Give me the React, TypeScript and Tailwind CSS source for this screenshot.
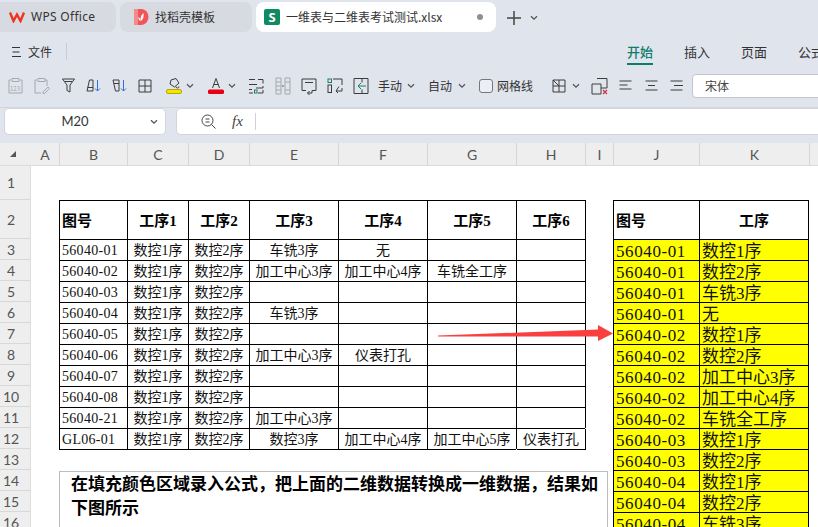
import React from 'react';

const leftRows = [
  ['56040-01', '数控1序', '数控2序', '车铣3序', '无', '', ''],
  ['56040-02', '数控1序', '数控2序', '加工中心3序', '加工中心4序', '车铣全工序', ''],
  ['56040-03', '数控1序', '数控2序', '', '', '', ''],
  ['56040-04', '数控1序', '数控2序', '车铣3序', '', '', ''],
  ['56040-05', '数控1序', '数控2序', '', '', '', ''],
  ['56040-06', '数控1序', '数控2序', '加工中心3序', '仪表打孔', '', ''],
  ['56040-07', '数控1序', '数控2序', '', '', '', ''],
  ['56040-08', '数控1序', '数控2序', '', '', '', ''],
  ['56040-21', '数控1序', '数控2序', '加工中心3序', '', '', ''],
  ['GL06-01', '数控1序', '数控2序', '数控3序', '加工中心4序', '加工中心5序', '仪表打孔'],
];

const rightRows = [
  ['56040-01', '数控1序'],
  ['56040-01', '数控2序'],
  ['56040-01', '车铣3序'],
  ['56040-01', '无'],
  ['56040-02', '数控1序'],
  ['56040-02', '数控2序'],
  ['56040-02', '加工中心3序'],
  ['56040-02', '加工中心4序'],
  ['56040-02', '车铣全工序'],
  ['56040-03', '数控1序'],
  ['56040-03', '数控2序'],
  ['56040-04', '数控1序'],
  ['56040-04', '数控2序'],
  ['56040-04', '车铣3序'],
];

const Chevron = ({ className = '' }: { className?: string }) => (
  <svg width="8" height="6" viewBox="0 0 8 6" fill="none" stroke="#555" strokeWidth="1.3" className={`shrink-0 ${className}`}>
    <path d="M1 1.2 4 4.2 7 1.2" />
  </svg>
);

const Ico = ({ w = 16, className = '', children }: { w?: number; className?: string; children: React.ReactNode }) => (
  <svg width={w} height="18" viewBox={`0 0 ${w} 18`} fill="none" stroke="#3c3c3c" strokeWidth="1" className={`shrink-0 ${className}`}>
    {children}
  </svg>
);

const HeadCell = ({ label, first }: { label: string; first?: boolean }) => (
  <div className={`flex items-center justify-center bg-[#eeeeee] border-b border-[#dcdcdc] text-[14px] text-[#555] font-['Lato',sans-serif] ${first ? '' : 'border-l border-l-[#d6d6d6]'}`}>
    {label}
  </div>
);

const RowHead = ({ n }: { n: number }) => (
  <div className="flex items-center justify-center bg-[#eeeeee] border-b border-[#d8d8d8] border-r border-r-[#dddddd] text-[14px] pr-[8px] text-[#555] font-['Lato',sans-serif]">
    {n}
  </div>
);

const serif = "font-['Liberation_Serif','Noto_Sans_CJK_SC',serif]";

export default function App() {
  return (
    <div className="relative w-[818px] h-[527px] overflow-hidden bg-[#e0e4ed] text-[#333] font-['Noto_Sans_CJK_SC',sans-serif]">
      {/* tab bar */}
      <div className="flex h-[33px] items-start pt-[2px] text-[12px]">
        <div className="flex h-[30px] w-[116px] items-center rounded-r-lg bg-[#d8dae2] pl-[9px]">
          <svg width="16" height="12" viewBox="0 0 16 12" fill="none" stroke="#f0321e" strokeWidth="2.4">
            <path d="M1 1.5 4.5 10 8 3.5 11.5 10 15 1.5" />
          </svg>
          <span className="ml-[6px] font-['Noto_Sans',sans-serif] tracking-[0.3px]">WPS Office</span>
        </div>
        <div className="ml-[4px] flex h-[30px] w-[132px] items-center rounded-lg bg-[#d8dae2] pl-[14px]">
          <svg width="15" height="16" viewBox="0 0 15 16">
            <path d="M0 0h7a7.5 8 0 0 1 0 16H0z" fill="#f0555a" />
            <path d="M0 0h4v16H0z" fill="#f58a8a" />
            <path d="M7 12c-1-3 0-6 2.5-8 .5 3 0 6-2.5 8zM6.500 12c-1.500-.5-2.200-2-2-4 1.300.8 2 2.200 2 4z" fill="#fff" />
          </svg>
          <span className="ml-[6px]">找稻壳模板</span>
        </div>
        <div className="ml-[4px] flex h-[30px] w-[240px] items-center rounded-lg bg-white pl-[8px]">
          <div className="flex h-[16px] w-[16px] items-center justify-center rounded-[2px] bg-[#0f8a63] text-[13px] font-bold leading-none text-white font-['Noto_Sans',sans-serif]">S</div>
          <span className="ml-[6px] w-[160px] whitespace-nowrap">一维表与二维表考试测试.xlsx</span>
          <span className="ml-[31px] h-[6px] w-[6px] rounded-full bg-[#8f8f8f]" />
        </div>
        <svg width="14" height="14" viewBox="0 0 14 14" stroke="#444" strokeWidth="1.5" className="ml-[11px] mt-[9px]">
          <path d="M7 0v14M0 7h14" />
        </svg>
        <Chevron className="ml-[9px] mt-[13px]" />
      </div>

      {/* menu row */}
      <div className="flex h-[37px] items-center text-[12px] whitespace-nowrap">
        <svg width="9" height="10" viewBox="0 0 9 10" stroke="#333" className="ml-[12px] shrink-0">
          <path d="M0 .5h8M.5 5h7M0 9.500h9" />
        </svg>
        <span className="ml-[7px] w-[26px] shrink-0">文件</span>
        <span className="ml-[12px] h-[17px] w-px shrink-0 bg-[#c8ccd4]" />
        <div className="ml-[560px] flex shrink-0 text-[13px]">
          <div className="relative w-[26px] font-medium text-[#0c7c6c]">
            开始
            <span className="absolute left-0 top-[21px] h-[2px] w-[26px] bg-[#0c7c6c]" />
          </div>
          <span className="ml-[31px] w-[26px]">插入</span>
          <span className="ml-[31px] w-[26px]">页面</span>
          <span className="ml-[31px]">公式</span>
        </div>
      </div>

      {/* toolbar */}
      <div className="flex h-[30px] items-center pt-[2px] text-[12px] whitespace-nowrap [&>*]:shrink-0">
        <Ico className="ml-[8px]">
          <g stroke="#a5a8ae">
            <path d="M3 3H1v13h13V3h-2M4 1.500h7v3H4z" />
            <text x="2" y="14" fontSize="6" fill="#a5a8ae" stroke="none">123</text>
          </g>
        </Ico>
        <Ico className="ml-[10px]">
          <g stroke="#a5a8ae">
            <path d="M3 3H1v13h6M13 3h-2v0M13 3v6M4 1.500h7v3H4zM9 15l5-5 1.500 1.500-5 5H9z" />
          </g>
        </Ico>
        <Ico w={13} className="ml-[12px]">
          <path d="M.5 2h12l-4.500 6v7l-3-1.500V8zM3 4.500h7" />
        </Ico>
        <Ico className="ml-[11px]">
          <path d="M1 14 3.500 3H7v11zM1.700 10.500H7" />
          <path d="M11.500 3v11M9 11.500l2.500 2.500 2.500-2.500" stroke="#2f6fe0" />
        </Ico>
        <Ico className="ml-[10px]">
          <path d="M1 3h6v11H3.500zM2 6.500h5" />
          <path d="M11.500 3v11M9 11.500l2.500 2.500 2.500-2.500" stroke="#2f6fe0" />
        </Ico>
        <Ico w={14} className="ml-[10px]">
          <path d="M1 3h12v12H1zM1 9h12M7 3v12" />
        </Ico>
        <Ico w={16} className="ml-[14px]">
          <path d="M5 3 10 1.500 13 6l-4.500 4L4 7zM10 9.500a1.500 1.500 0 0 0 3 0" />
          <rect x=".5" y="12.500" width="15" height="4" rx="1.500" fill="#f4e600" stroke="#b5ab00" />
        </Ico>
        <Chevron className="ml-[4px]" />
        <Ico w={16} className="ml-[14px]">
          <path d="M4.500 11 8 1.500 11.500 11M5.800 7.500h4.400" />
          <rect x="0" y="12.500" width="16" height="4.500" rx="1.500" fill="#e60012" stroke="none" />
        </Ico>
        <Chevron className="ml-[4px]" />
        <Ico className="ml-[12px]">
          <path d="M1 2.500h6M10 2.500h5v4M1 7.500h8M15 9v2H8M1 12.500h3M1 16h4M10 16h5v-3" />
          <rect x="6.500" y="13" width="2.500" height="3" stroke="#16845f" />
        </Ico>
        <Ico className="ml-[11px]">
          <g stroke="#a5a8ae">
            <path d="M1 1h5v16H1zM10 1h5v16h-5zM1 5h5M1 9h5M1 13h5M10 5h5M10 13h5" />
          </g>
          <path d="M7 9h2" stroke="#16845f" />
        </Ico>
        <Ico className="ml-[10px]">
          <path d="M5 13.500H1V2h14v11.500h-4M4 5.500h8M11 13.500v2.500H6.500M8.500 14 6.500 16l2 2" />
        </Ico>
        <Ico className="ml-[10px]">
          <path d="M6 2h9v6M15 11v3H9" />
          <rect x="1" y="2" width="3.500" height="3.500" stroke="#16845f" />
          <rect x="1" y="8" width="3.500" height="7.500" stroke="#3c3c3c" />
          <path d="M12 9.500 9 14l2 2" />
        </Ico>
        <Ico className="ml-[10px]">
          <path d="M1 1.500h14v15H1zM9 1.500v4M9 12.500v4" />
          <path d="M13 9H5M8 6 5 9l3 3" stroke="#16845f" />
        </Ico>
        <span className="ml-[9px] w-[25px]">手动</span>
        <Chevron className="ml-[4px]" />
        <span className="ml-[13px] w-[25px]">自动</span>
        <Chevron className="ml-[5px]" />
        <span className="ml-[13px] h-[14px] w-[14px] rounded-[3px] border border-[#777] bg-[#eceef3]" />
        <span className="ml-[4px] w-[36px]">网格线</span>
        <Ico w={14} className="ml-[19px]">
          <path d="M1 3h12v12H1zM1 9h12M7 3v12M1 3l6 6" />
        </Ico>
        <Chevron className="ml-[6px]" />
        <Ico w={17} className="ml-[11px]">
          <path d="M1 7h9v10H1zM6 1.500h10V11H10" />
          <path d="M12 13l4 4M16 13l-4 4" stroke="#d9304a" strokeWidth="1.300" />
        </Ico>
        <Ico w={13} className="ml-[11px]">
          <path d="M.5 4h12M.5 8h8M.5 12h12" />
        </Ico>
        <Ico w={13} className="ml-[13px]">
          <path d="M.5 4h12M3 8.500h7M.5 13h12" />
        </Ico>
        <Ico w={13} className="ml-[12px]">
          <path d="M.5 4h12M4 8.500h9M.5 13h12" />
        </Ico>
        <div className="ml-[9px] flex h-[24px] w-[140px] items-center rounded-l-[4px] border border-[#c4c6cc] bg-white pl-[12px] text-[12px] text-[#444]">
          宋体
        </div>
      </div>

      {/* formula row */}
      <div className="mt-[7px] border-t border-[#d2d5dd]">
        <div className="flex h-[27px] [&>*]:shrink-0">
          <div className="relative ml-[4px] flex w-[162px] items-center justify-center rounded-[5px] border border-[#d3d5db] bg-white pr-[20px] text-[13px] font-['Lato',sans-serif]">
            M20
            <Chevron className="absolute right-[7px] top-[10px]" />
          </div>
          <div className="ml-[10px] flex w-[660px] items-center rounded-[5px] border border-[#d3d5db] bg-white pl-[24px]">
            <svg width="15" height="15" viewBox="0 0 15 15" fill="none" stroke="#444">
              <circle cx="6.500" cy="6.500" r="5.500" />
              <path d="m10.500 10.500 4 4M4.500 5h4M4.500 8h4" />
            </svg>
            <span className={`ml-[16px] text-[15px] italic text-[#444] ${serif}`}>fx</span>
            <span className="ml-[12px] h-[17px] w-px bg-[#d0d2d8]" />
          </div>
        </div>
      </div>

      {/* sheet */}
      <div className="mt-[8px] grid grid-cols-[31px_28px_68px_61px_61px_89px_89px_89px_69px_28px_86px_110px_1fr] grid-rows-[23px_34px_39px_repeat(14,21px)] bg-white">
        <div className="flex items-center justify-center bg-[#eeeeee] border-b border-[#dcdcdc]">
          <span className="ml-[-5px] h-0 w-0 border-b-[6px] border-l-[6px] border-b-[#555] border-l-transparent" />
        </div>
        {['A', 'B', 'C', 'D', 'E', 'F', 'G', 'H', 'I', 'J', 'K', ''].map((c, i) => (
          <HeadCell key={i} label={c} first={i === 0} />
        ))}

        {/* row 1 */}
        <RowHead n={1} />
        <div className="col-span-12" />

        {/* row 2 */}
        <RowHead n={2} />
        <div />
        <div className={`flex items-center border-t border-l border-black pl-[2px] pt-[2px] text-[15px] font-bold text-black ${serif}`}>图号</div>
        {['工序1', '工序2', '工序3', '工序4', '工序5', '工序6'].map((h, i) => (
          <div key={h} className={`flex items-center justify-center border-t border-l border-black pt-[2px] text-[15px] font-bold text-black ${serif} ${i === 5 ? 'shadow-[1px_0_0_#000]' : ''}`}>{h}</div>
        ))}
        <div />
        <div className={`flex items-center border-t border-l border-black pl-[2px] pt-[2px] text-[15px] font-bold text-black ${serif}`}>图号</div>
        <div className={`flex items-center justify-center border-t border-x border-black pt-[2px] text-[15px] font-bold text-black ${serif}`}>工序</div>
        <div />

        {/* rows 3 to 16 */}
        {rightRows.map((right, r) => {
          const left = leftRows[r];
          const last = r === leftRows.length - 1;
          return (
            <React.Fragment key={r}>
              <RowHead n={r + 3} />
              <div />
              {left ? (
                left.map((v, c) => (
                  <div
                    key={c}
                    className={`flex items-center border-t border-l border-black pt-[2px] text-[14px] leading-none whitespace-nowrap text-[#111] ${serif} ${c === 0 ? 'pl-[2px] tracking-[0.3px]' : 'justify-center'} ${last && c === 6 ? 'shadow-[1px_1px_0_#000]' : last ? 'shadow-[0_1px_0_#000]' : c === 6 ? 'shadow-[1px_0_0_#000]' : ''}`}
                  >
                    {v}
                  </div>
                ))
              ) : (
                <div className="col-span-7" />
              )}
              <div />
              <div className={`flex items-center overflow-hidden border-t border-l border-black bg-[#ffff00] pl-[2px] pt-[2px] text-[17px] leading-none tracking-[0.6px] whitespace-nowrap text-[#111] ${serif}`}>
                {right[0]}
              </div>
              <div className={`flex items-center overflow-hidden border-t border-x border-black bg-[#ffff00] pl-[2px] pt-[2px] text-[17px] leading-none whitespace-nowrap text-[#111] ${serif}`}>
                {right[1]}
              </div>
              <div />
            </React.Fragment>
          );
        })}
      </div>

      {/* text box floating over the sheet */}
      <div className={`absolute left-[59px] top-[471px] h-[80px] w-[549px] border border-[#bdbdbd] bg-white pl-[11px] pt-[1px] text-[17px] font-bold leading-[24px] text-black ${serif}`}>
        在填充颜色区域录入公式，把上面的二维数据转换成一维数据，结果如下图所示
      </div>

      {/* arrow */}
      <svg width="180" height="20" viewBox="0 0 180 20" className="absolute left-[436px] top-[323px]">
        <polygon points="2,12.500 162,6.500 162,2 177,10.500 162,18 162,13.500 2,13.500" fill="#fb3f3f" />
      </svg>
    </div>
  );
}
